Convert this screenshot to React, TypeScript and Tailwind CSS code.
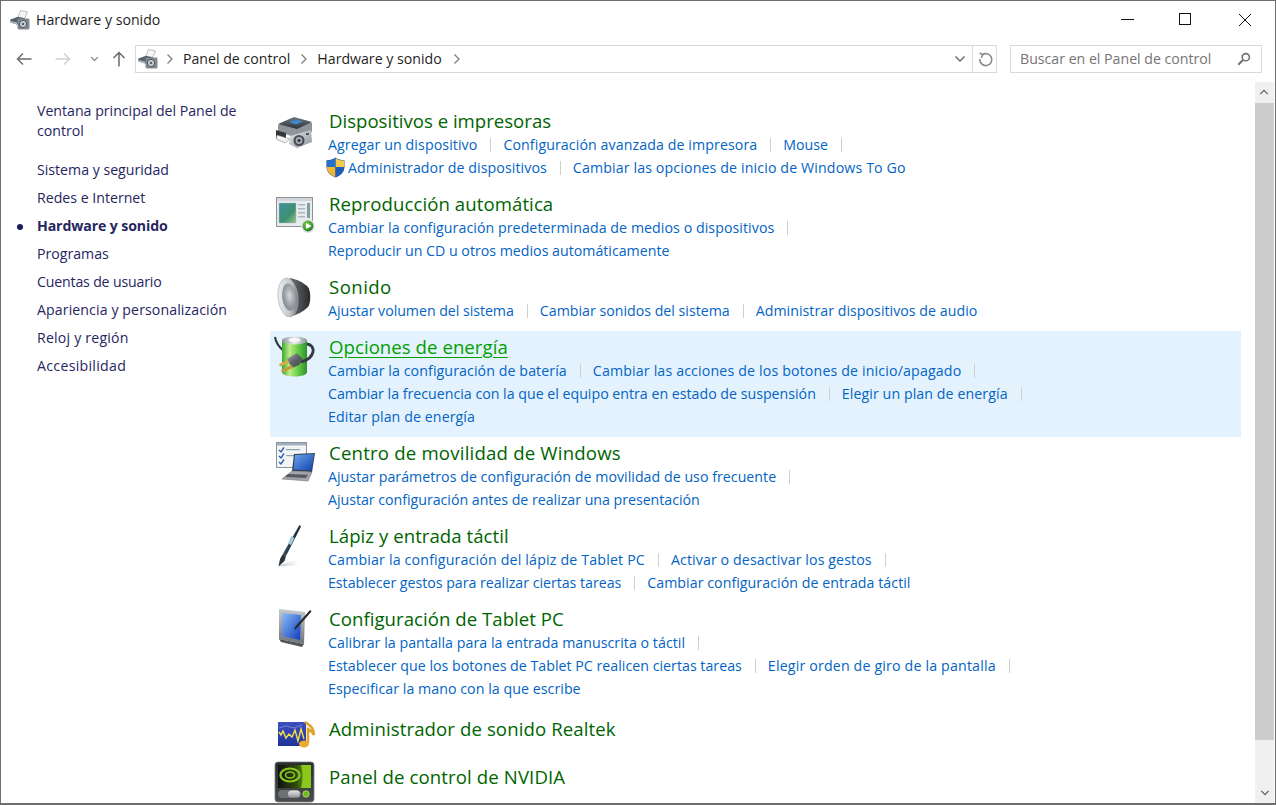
import React from "react";

const FONT = "font-['Open_Sans','Noto_Sans',sans-serif]";

function HwIcon({ size = 20 }: { size?: number }) {
  return (
    <svg width={size} height={size} viewBox="0 0 20 20" className="shrink-0">
      <path d="M10.5 0.5 L17.5 2 L14 9.5 L7.5 8 Z" fill="#f6f6f6" stroke="#a5a5a5" strokeWidth="0.7" />
      <path d="M0.3 9.5 L8 6.8 L15 8.2 L15 12 L7 14.5 L0.3 12.5 Z" fill="#596169" />
      <path d="M0.5 11 L7 12.6 L7 14.5 L0.5 12.5 Z" fill="#b4bac0" />
      <rect x="7.5" y="8.5" width="12" height="11" rx="1.4" fill="#808992" />
      <circle cx="13" cy="14" r="3.6" fill="#ccd3d9" stroke="#3f464d" strokeWidth="0.9" />
      <circle cx="13" cy="14" r="1.3" fill="#59626b" />
    </svg>
  );
}

function Chevron({ className = "" }: { className?: string }) {
  return (
    <svg width="8" height="12" viewBox="0 0 8 12" className={className}>
      <path d="M1.5 1.5 L6 6 L1.5 10.5" fill="none" stroke="#7d7d7d" strokeWidth="1.3" />
    </svg>
  );
}

function DownChevron({ color = "#6f6f6f", w = 12 }: { color?: string; w?: number }) {
  return (
    <svg width={w} height="8" viewBox="0 0 12 8">
      <path d="M1.5 1.5 L6 6 L10.5 1.5" fill="none" stroke={color} strokeWidth="1.5" />
    </svg>
  );
}

function Shield() {
  return (
    <svg width="19" height="21" viewBox="0 0 19 21" className="shrink-0">
      <path d="M9.5 0.5 C12 2.4 15 3.2 18.5 3.2 L18.5 10 C18.5 15 14.5 18.6 9.5 20.5 C4.5 18.6 0.5 15 0.5 10 L0.5 3.2 C4 3.2 7 2.4 9.5 0.5 Z" fill="#1d5bb0" />
      <path d="M9.5 0.9 C12 2.7 15 3.5 18.2 3.5 L18.2 10 L9.5 10 Z" fill="#f7c948" />
      <path d="M9.5 10 L0.8 10 C0.8 15 4.7 18.4 9.5 20.2 Z" fill="#f2b632" />
      <path d="M9.5 0.9 C7 2.7 4 3.5 0.8 3.5 L0.8 10 L9.5 10 Z" fill="#2a6fc9" />
      <path d="M18.2 10 L9.5 10 L9.5 20.2 C14.3 18.4 18.2 15 18.2 10 Z" fill="#1f5fb8" />
    </svg>
  );
}

function PrinterIcon() {
  return (
    <svg width="48" height="48" viewBox="0 0 48 48">
      <defs>
        <linearGradient id="pr1" x1="0" y1="0" x2="0" y2="1"><stop offset="0" stopColor="#6f767c" /><stop offset="1" stopColor="#2d3237" /></linearGradient>
        <linearGradient id="pr2" x1="0" y1="0" x2="1" y2="1"><stop offset="0" stopColor="#e8ebed" /><stop offset="1" stopColor="#8c9298" /></linearGradient>
      </defs>
      <path d="M8 20 L24 13 L42 18 L42 27 L26 33 L8 26 Z" fill="#8e9499" />
      <path d="M8 19 L24 12 L42 17 L27 24 Z" fill="url(#pr1)" />
      <path d="M19 17 L26 14.5 L33 16.5 L26 19.5 Z" fill="#3f88c9" />
      <path d="M6 25 L16 28 L16 36 L6 33 Z" fill="#33383d" />
      <path d="M7 30 L20 34 L15 38 L6 34 Z" fill="#f1f2f3" stroke="#6c7278" strokeWidth="0.5" />
      <path d="M20 31 L41 25 L42 37 L27 43 L19 39 Z" fill="url(#pr2)" />
      <circle cx="29" cy="35.5" r="5.5" fill="#474d53" />
      <circle cx="29" cy="35.5" r="3.4" fill="#a7aeb4" />
      <circle cx="29" cy="35.5" r="1.6" fill="#30353a" />
      <rect x="36" y="28" width="3" height="2" fill="#4e5459" />
    </svg>
  );
}

function AutoplayIcon() {
  return (
    <svg width="48" height="48" viewBox="0 0 48 48">
      <defs>
        <linearGradient id="ap1" x1="0" y1="0" x2="1" y2="1"><stop offset="0" stopColor="#3f8f9f" /><stop offset="0.6" stopColor="#3d9070" /><stop offset="1" stopColor="#9cc58f" /></linearGradient>
        <radialGradient id="ap2" cx="0.4" cy="0.35" r="0.7"><stop offset="0" stopColor="#7fd14d" /><stop offset="1" stopColor="#1f7a1f" /></radialGradient>
      </defs>
      <rect x="6.5" y="9.5" width="36" height="29" fill="#e9ecee" stroke="#8d9296" />
      <rect x="7" y="10" width="35" height="3" fill="#d2d6da" />
      <rect x="9" y="15" width="17" height="20" fill="url(#ap1)" stroke="#b5bdc1" strokeWidth="0.5" />
      <rect x="28" y="16" width="7" height="1.5" fill="#aeb6bb" />
      <rect x="28" y="20" width="7" height="1.5" fill="#aeb6bb" />
      <rect x="28" y="24" width="7" height="1.5" fill="#aeb6bb" />
      <rect x="28" y="28" width="7" height="1.5" fill="#aeb6bb" />
      <rect x="37" y="15" width="3" height="15" fill="#7f9f9a" />
      <circle cx="38" cy="38" r="7" fill="#dfe3e5" />
      <circle cx="38" cy="38" r="5.4" fill="url(#ap2)" />
      <path d="M36 35 L41.5 38 L36 41 Z" fill="#ffffff" />
    </svg>
  );
}

function SpeakerIcon() {
  return (
    <svg width="48" height="48" viewBox="0 0 48 48">
      <defs>
        <linearGradient id="sp1" x1="0" y1="0" x2="1" y2="0.3"><stop offset="0" stopColor="#f4f5f6" /><stop offset="0.7" stopColor="#c4c8cb" /><stop offset="1" stopColor="#84898d" /></linearGradient>
        <linearGradient id="sp2" x1="0" y1="0" x2="1" y2="0"><stop offset="0" stopColor="#6f7478" /><stop offset="1" stopColor="#26292c" /></linearGradient>
        <radialGradient id="sp3" cx="0.55" cy="0.45" r="0.55"><stop offset="0" stopColor="#d7dadc" /><stop offset="0.5" stopColor="#a9aeb2" /><stop offset="1" stopColor="#84898d" /></radialGradient>
      </defs>
      <path d="M20 7 C26 8 33 11 38 16 C41 20 41 32 38 36 C33 41 26 44 20 46 Z" fill="url(#sp2)" />
      <ellipse cx="18" cy="26.5" rx="10" ry="19.5" fill="url(#sp1)" transform="rotate(-6 18 26.5)" stroke="#a6aaad" strokeWidth="0.6" />
      <ellipse cx="19" cy="26" rx="6.8" ry="13.5" fill="url(#sp3)" transform="rotate(-6 19 26)" />
    </svg>
  );
}

function BatteryIcon() {
  return (
    <svg width="48" height="48" viewBox="0 0 48 48">
      <defs>
        <linearGradient id="ba1" x1="0" y1="0" x2="1" y2="0"><stop offset="0" stopColor="#3aa832" /><stop offset="0.3" stopColor="#bdec88" /><stop offset="0.65" stopColor="#66cc44" /><stop offset="1" stopColor="#2c9130" /></linearGradient>
        <linearGradient id="ba2" x1="0" y1="0" x2="1" y2="1"><stop offset="0" stopColor="#a3a9ae" /><stop offset="0.5" stopColor="#5c6369" /><stop offset="1" stopColor="#3a4046" /></linearGradient>
        <linearGradient id="ba3" x1="0" y1="0" x2="1" y2="0"><stop offset="0" stopColor="#8f9599" /><stop offset="0.5" stopColor="#e9ecee" /><stop offset="1" stopColor="#8f9599" /></linearGradient>
      </defs>
      <path d="M5 6 C6 13 10 17 14 20" fill="none" stroke="#30363b" strokeWidth="2" />
      <path d="M12 10 C12 5 37 5 37 10 L37 41 C37 47 12 47 12 41 Z" fill="url(#ba1)" />
      <ellipse cx="24.5" cy="9.5" rx="12.5" ry="4" fill="url(#ba3)" />
      <ellipse cx="24.5" cy="9" rx="6" ry="2" fill="#f6f7f6" />
      <path d="M37 13 C46 14 46 27 31 31" fill="none" stroke="#343a3f" strokeWidth="2.8" />
      <path d="M17 28 L27 22 L33 28 L29 34 L22 37 Z" fill="url(#ba2)" />
      <path d="M18 29 L9 33 L10 35.5 L19 32 Z" fill="#d8ac4a" />
      <path d="M22 34 L11 39 L12 41.5 L23 37 Z" fill="#c99a3c" />
    </svg>
  );
}

function MobilityIcon() {
  return (
    <svg width="48" height="48" viewBox="0 0 48 48">
      <defs>
        <linearGradient id="mo1" x1="0" y1="0" x2="1" y2="1"><stop offset="0" stopColor="#6ea8ef" /><stop offset="1" stopColor="#0f3fa8" /></linearGradient>
      </defs>
      <rect x="6.5" y="5.5" width="30" height="25" fill="#f2f4f6" stroke="#8b949c" />
      <rect x="7" y="6" width="29" height="2.5" fill="#9fb0bf" />
      <path d="M9 13 L11 15 L14 10.5" fill="none" stroke="#2c5fb0" strokeWidth="1.4" />
      <path d="M9 19 L11 21 L14 16.5" fill="none" stroke="#2c5fb0" strokeWidth="1.4" />
      <path d="M9 25 L11 27 L14 22.5" fill="none" stroke="#2c5fb0" strokeWidth="1.4" />
      <rect x="16" y="12" width="14" height="1.2" fill="#8fa0ae" />
      <rect x="16" y="18" width="10" height="1.2" fill="#8fa0ae" />
      <path d="M24 17 L45 16 L42 35 L22 34 Z" fill="#2f3f55" />
      <path d="M25 18 L44 17 L41.5 33.5 L23.5 32.5 Z" fill="url(#mo1)" />
      <path d="M22 34 L42 35 L38 44 L12 42 Z" fill="#a2a6ab" stroke="#62666a" strokeWidth="0.5" />
      <path d="M18 37 L38 37.7 L36 41 L15 40 Z" fill="#565a5f" />
    </svg>
  );
}

function PenIcon() {
  return (
    <svg width="48" height="48" viewBox="0 0 48 48">
      <defs>
        <linearGradient id="pe1" x1="0" y1="0" x2="1" y2="0.5"><stop offset="0" stopColor="#9cc3d6" /><stop offset="0.5" stopColor="#2e4150" /><stop offset="1" stopColor="#111820" /></linearGradient>
        <linearGradient id="pe2" x1="0" y1="0" x2="1" y2="0"><stop offset="0" stopColor="#b5b5b5" /><stop offset="1" stopColor="#ffffff" stopOpacity="0" /></linearGradient>
      </defs>
      <path d="M8 46 L22 41 L34 41 L24 46 Z" fill="url(#pe2)" />
      <path d="M29.5 5 L31 6.5 L16 36 L12.5 34.5 Z" fill="url(#pe1)" />
      <path d="M12.5 34.5 L16 36 L14.5 41 L8.5 46.5 L10 39 Z" fill="#28343e" />
      <path d="M21 16 L24.5 18 L21 25 L18 23.5 Z" fill="#a7c8d9" />
    </svg>
  );
}

function TabletIcon() {
  return (
    <svg width="48" height="48" viewBox="0 0 48 48">
      <defs>
        <linearGradient id="ta1" x1="0" y1="0" x2="1" y2="1"><stop offset="0" stopColor="#8fbdf5" /><stop offset="1" stopColor="#0e3cc0" /></linearGradient>
        <linearGradient id="ta2" x1="0" y1="0" x2="0" y2="1"><stop offset="0" stopColor="#c6cbd0" /><stop offset="1" stopColor="#6e7479" /></linearGradient>
      </defs>
      <path d="M9 6 L35 9 L34 41 L9 36 Z" fill="url(#ta2)" />
      <path d="M12 10 L31 12 L30 37 L12 33 Z" fill="url(#ta1)" />
      <path d="M9 36 L34 41 L32 44 L11 39 Z" fill="#4f555a" />
      <path d="M40 7 L41.5 8.5 L27 25 L24 27.5 L25 24 Z" fill="#23282c" />
    </svg>
  );
}

function RealtekIcon() {
  return (
    <svg width="48" height="48" viewBox="0 0 48 48">
      <defs>
        <linearGradient id="re1" x1="0" y1="0" x2="0" y2="1"><stop offset="0" stopColor="#3d4fc0" /><stop offset="1" stopColor="#1f3299" /></linearGradient>
      </defs>
      <path d="M8 13 L36 13 L36 37 L8 37 Z" fill="url(#re1)" />
      <path d="M9 23 L11 26 L13 22 L16 29 L19 25 L22 28 L25 21 L28 32 L31 20 L34 30" fill="none" stroke="#f5e04a" strokeWidth="1.4" />
      <path d="M9 19 L16 17 L24 19 L32 16" fill="none" stroke="#8ea0e0" strokeWidth="0.7" />
      <path d="M35 13 C39 16 44 18 44 26 C42 22 40 21 38 20 L38 34" fill="none" stroke="#e0a22a" strokeWidth="2.6" />
      <ellipse cx="34" cy="35" rx="5" ry="3.4" fill="#e8ac32" />
    </svg>
  );
}

function NvidiaIcon() {
  return (
    <svg width="48" height="48" viewBox="0 0 48 48">
      <defs>
        <linearGradient id="nv1" x1="0" y1="0" x2="0" y2="1"><stop offset="0" stopColor="#2a2c2e" /><stop offset="1" stopColor="#4a4d50" /></linearGradient>
        <linearGradient id="nv2" x1="0" y1="0" x2="1" y2="0"><stop offset="0" stopColor="#111" /><stop offset="0.55" stopColor="#2d4a0a" /><stop offset="1" stopColor="#8cc81c" /></linearGradient>
        <linearGradient id="nv3" x1="0" y1="0" x2="0" y2="1"><stop offset="0" stopColor="#e8e8e8" /><stop offset="1" stopColor="#8f9396" /></linearGradient>
      </defs>
      <rect x="5" y="5" width="39" height="40" rx="3" fill="url(#nv1)" stroke="#7a7e82" strokeWidth="0.8" />
      <rect x="8" y="8" width="33" height="23" fill="url(#nv2)" />
      <ellipse cx="20" cy="18" rx="9.5" ry="6.5" fill="none" stroke="#8cc81c" strokeWidth="2.2" />
      <ellipse cx="20" cy="18" rx="4.5" ry="3" fill="none" stroke="#8cc81c" strokeWidth="1.6" />
      <path d="M31 8 H41 V31 H31 C33 25 33 13 31 8 Z" fill="#8cc81c" />
      <rect x="8" y="33" width="23" height="8" rx="4" fill="#6c7074" />
      <rect x="18" y="33.5" width="12" height="7" rx="3.5" fill="url(#nv3)" />
      <circle cx="36" cy="37" r="3.2" fill="#6dbb1c" stroke="#b7e07a" strokeWidth="0.8" />
    </svg>
  );
}

function A({ children, sep = false, t = "" }: { children: React.ReactNode; sep?: boolean; t?: string }) {
  return (
    <>
      <span className={`whitespace-nowrap text-[#0364c4] ${t}`}>{children}</span>
      {sep && <span className="mr-[12px] ml-[13px] h-[14px] w-px shrink-0 bg-[#cfcfcf]" />}
    </>
  );
}

function Line({ children, className = "" }: { children: React.ReactNode; className?: string }) {
  return <div className={`flex h-[23px] items-center text-[14.2px] ${className}`}>{children}</div>;
}

function Section({
  icon,
  title,
  hot = false,
  compact = false,
  t = "",
  children,
}: {
  icon: React.ReactNode;
  title: string;
  hot?: boolean;
  compact?: boolean;
  t?: string;
  children?: React.ReactNode;
}) {
  return (
    <div className={`flex ${compact ? "h-[48px]" : ""} ${hot ? "bg-[#e4f2fd]" : ""}`}>
      <div className="h-[48px] w-[58px] shrink-0">{icon}</div>
      <div className={compact ? "pt-[8px]" : "pt-[4px] pb-[9px]"}>
        <div
          className={`h-[24px] pl-px text-[18.6px] leading-[24px] whitespace-nowrap ${t} ${
            hot ? "text-[#00a000] underline underline-offset-[3px]" : "text-[#006400]"
          }`}
        >
          {title}
        </div>
        {children}
      </div>
    </div>
  );
}

function Nav({ children, active = false, t = "" }: { children: React.ReactNode; active?: boolean; t?: string }) {
  return (
    <div className={`relative h-[28px] text-[14.15px] leading-[28px] text-[#26265f] ${active ? "font-bold" : ""} ${t}`}>
      {active && <span className="absolute top-[12px] -left-[20px] h-[6px] w-[6px] rounded-full bg-[#1c1c5c]" />}
      {children}
    </div>
  );
}

export default function App() {
  return (
    <div className={`${FONT} flex h-[805px] w-[1276px] flex-col overflow-hidden border border-b-2 border-[#6e6e6e] bg-white text-[#1f1f1f]`}>
      {/* title bar */}
      <div className="flex h-[37px] shrink-0 items-center">
        <div className="ml-[9px]"><HwIcon /></div>
        <span className="ml-[6px] text-[14.15px]">Hardware y sonido</span>
        <div className="ml-auto flex items-center">
          <svg width="13" height="13" viewBox="0 0 13 13" className="mr-[45px]"><rect x="0" y="6" width="13" height="1" fill="#111" /></svg>
          <svg width="13" height="13" viewBox="0 0 13 13" className="mr-[46px]"><rect x="0.5" y="0.5" width="11" height="11" fill="none" stroke="#111" /></svg>
          <svg width="14" height="14" viewBox="0 0 14 14" className="mr-[23px]"><path d="M1 1 L13 13 M13 1 L1 13" stroke="#111" strokeWidth="1" /></svg>
        </div>
      </div>
      {/* toolbar */}
      <div className="mt-[7px] flex h-[28px] shrink-0 items-center">
        <svg width="16" height="14" viewBox="0 0 16 14" className="ml-[15px]"><path d="M15.5 7 H1.5 M7 1.5 L1.5 7 L7 12.5" fill="none" stroke="#6b6b6b" strokeWidth="1.5" /></svg>
        <svg width="16" height="14" viewBox="0 0 16 14" className="ml-[23px]"><path d="M0.5 7 H14.5 M9 1.5 L14.5 7 L9 12.5" fill="none" stroke="#d0d0d0" strokeWidth="1.5" /></svg>
        <div className="ml-[19px]"><DownChevron w={9} color="#7d7d7d" /></div>
        <svg width="14" height="16" viewBox="0 0 14 16" className="ml-[13px]"><path d="M7 15.5 V1.5 M1.5 7 L7 1.5 L12.5 7" fill="none" stroke="#6b6b6b" strokeWidth="1.5" /></svg>
        <div className="ml-[9px] flex h-[28px] w-[862px] items-center border border-[#d9d9d9]">
          <div className="ml-[2px]"><HwIcon /></div>
          <Chevron className="ml-[8px]" />
          <span className="ml-[9px] text-[14.15px]">Panel de control</span>
          <Chevron className="ml-[10px]" />
          <span className="ml-[9px] text-[14.15px]">Hardware y sonido</span>
          <Chevron className="ml-[11px]" />
          <div className="ml-auto flex h-full items-center">
            <div className="mr-[6px]"><DownChevron /></div>
            <div className="flex h-full w-[24px] items-center justify-center border-l border-[#d9d9d9] pl-[2px]">
              <svg width="17" height="17" viewBox="0 0 17 17"><path d="M5.2 3.8 A6 6 0 1 1 2.8 8" fill="none" stroke="#8a8a8a" strokeWidth="1.6" /><path d="M2.6 2 L5.8 3.8 L4.2 7" fill="none" stroke="#8a8a8a" strokeWidth="1.5" /></svg>
            </div>
          </div>
        </div>
        <div className="ml-[13px] flex h-[28px] w-[252px] items-center border border-[#d9d9d9]">
          <span className="ml-[9px] text-[14.15px] text-[#757575]">Buscar en el Panel de control</span>
          <svg width="14" height="14" viewBox="0 0 14 14" className="mr-[10px] ml-auto"><circle cx="8.8" cy="5.2" r="3.6" fill="none" stroke="#707070" strokeWidth="1.6" /><path d="M6 8 L1.2 12.8" stroke="#707070" strokeWidth="2" /></svg>
        </div>
      </div>
      {/* body */}
      <div className="mt-[9px] flex min-h-0 flex-1">
        <div className="w-[269px] shrink-0 pt-[19px] pl-[36px]">
          <div className="mb-[15px] w-[215px] text-[14.15px] leading-[20px] text-[#26265f]">
            Ventana principal del Panel de control
          </div>
          <Nav>Sistema y seguridad</Nav>
          <Nav>Redes e Internet</Nav>
          <Nav active t="tracking-[-0.12px]">Hardware y sonido</Nav>
          <Nav>Programas</Nav>
          <Nav t="tracking-[-0.17px]">Cuentas de usuario</Nav>
          <Nav t="tracking-[0.1px]">Apariencia y personalización</Nav>
          <Nav t="tracking-[0.2px]">Reloj y región</Nav>
          <Nav t="tracking-[0.3px]">Accesibilidad</Nav>
        </div>
        <div className="w-[971px] shrink-0 pt-[23px]">
          <Section icon={<PrinterIcon />} title="Dispositivos e impresoras">
            <Line>
              <A sep t="tracking-[0.09px]">Agregar un dispositivo</A>
              <A sep t="tracking-[0.09px]">Configuración avanzada de impresora</A>
              <A sep>Mouse</A>
            </Line>
            <Line className="-ml-[2px]">
              <Shield />
              <span className="w-[3px]" />
              <A sep t="tracking-[0.07px]">Administrador de dispositivos</A>
              <A t="tracking-[0.13px]">Cambiar las opciones de inicio de Windows To Go</A>
            </Line>
          </Section>
          <Section icon={<AutoplayIcon />} title="Reproducción automática" t="tracking-[0.08px]">
            <Line><A sep t="tracking-[0.06px]">Cambiar la configuración predeterminada de medios o dispositivos</A></Line>
            <Line><A>Reproducir un CD u otros medios automáticamente</A></Line>
          </Section>
          <Section icon={<SpeakerIcon />} title="Sonido" t="tracking-[0.45px]">
            <Line>
              <A sep t="tracking-[-0.04px]">Ajustar volumen del sistema</A>
              <A sep>Cambiar sonidos del sistema</A>
              <A t="tracking-[0.03px]">Administrar dispositivos de audio</A>
            </Line>
          </Section>
          <Section hot icon={<BatteryIcon />} title="Opciones de energía" t="tracking-[0.05px]">
            <Line>
              <A sep t="tracking-[0.09px]">Cambiar la configuración de batería</A>
              <A sep t="tracking-[0.15px]">Cambiar las acciones de los botones de inicio/apagado</A>
            </Line>
            <Line>
              <A sep>Cambiar la frecuencia con la que el equipo entra en estado de suspensión</A>
              <A sep t="tracking-[0.08px]">Elegir un plan de energía</A>
            </Line>
            <Line><A t="tracking-[0.09px]">Editar plan de energía</A></Line>
          </Section>
          <Section icon={<MobilityIcon />} title="Centro de movilidad de Windows" t="tracking-[0.2px]">
            <Line><A sep t="tracking-[0.03px]">Ajustar parámetros de configuración de movilidad de uso frecuente</A></Line>
            <Line><A t="tracking-[-0.02px]">Ajustar configuración antes de realizar una presentación</A></Line>
          </Section>
          <Section icon={<PenIcon />} title="Lápiz y entrada táctil" t="tracking-[0.05px]">
            <Line>
              <A sep t="tracking-[0.17px]">Cambiar la configuración del lápiz de Tablet PC</A>
              <A sep t="tracking-[0.1px]">Activar o desactivar los gestos</A>
            </Line>
            <Line>
              <A sep t="tracking-[-0.02px]">Establecer gestos para realizar ciertas tareas</A>
              <A t="tracking-[0.05px]">Cambiar configuración de entrada táctil</A>
            </Line>
          </Section>
          <Section icon={<TabletIcon />} title="Configuración de Tablet PC" t="tracking-[0.04px]">
            <Line><A sep t="tracking-[0.04px]">Calibrar la pantalla para la entrada manuscrita o táctil</A></Line>
            <Line>
              <A sep t="tracking-[0.02px]">Establecer que los botones de Tablet PC realicen ciertas tareas</A>
              <A sep t="tracking-[0.17px]">Elegir orden de giro de la pantalla</A>
            </Line>
            <Line><A t="tracking-[0.05px]">Especificar la mano con la que escribe</A></Line>
          </Section>
          <Section compact icon={<RealtekIcon />} title="Administrador de sonido Realtek" t="tracking-[0.1px]" />
          <Section compact icon={<NvidiaIcon />} title="Panel de control de NVIDIA" t="tracking-[0.11px]" />
        </div>
        {/* scrollbar */}
        <div className="ml-[14px] flex w-[19px] shrink-0 flex-col bg-[#f0f0f0]">
          <div className="flex h-[21px] rotate-180 items-center justify-center"><DownChevron w={10} color="#606060" /></div>
          <div className="h-[637px] bg-[#cdcdcd]" />
          <div className="mt-auto flex h-[21px] items-center justify-center"><DownChevron w={10} color="#606060" /></div>
        </div>
      </div>
    </div>
  );
}
